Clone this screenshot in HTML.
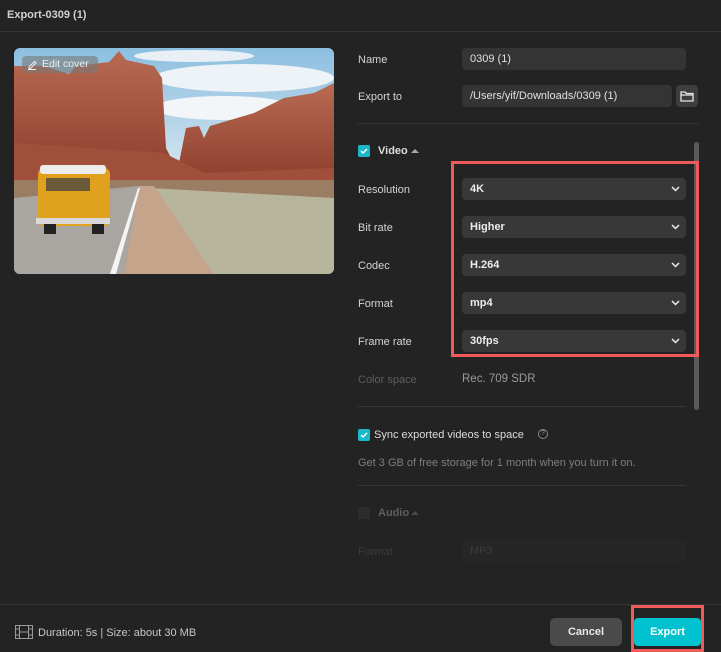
<!DOCTYPE html>
<html><head><style>
*{margin:0;padding:0;box-sizing:border-box}
body{width:721px;height:652px;background:#232323;font-family:"Liberation Sans",sans-serif;color:#d8d8d8;position:relative;overflow:hidden;font-size:11px}
.abs{position:absolute}
.title{left:7px;top:9px;font-size:11px;font-weight:bold;color:#d0d0d0}
.hl{height:1px;background:#363636}
.lbl{left:358px;font-size:11px;color:#d4d4d4}
.inp{left:462px;height:22px;background:#343434;border-radius:4px;padding-left:8px;line-height:23px;color:#e0e0e0;font-size:11px}
.sel{left:462px;width:224px;height:22px;background:#383838;border-radius:4px;padding-left:8px;line-height:23px;color:#ececec;font-size:11px;font-weight:bold}
.sel svg{position:absolute;right:6px;top:8px}
.cb{width:12px;height:12px;border-radius:2px;background:#1ab8c9}
</style></head><body>
<div class="abs title">Export-0309 (1)</div>
<div class="abs hl" style="left:0;top:31px;width:721px"></div>

<div class="abs" style="left:14px;top:48px;width:320px;height:226px;border-radius:6px;overflow:hidden">
<svg width="320" height="226" viewBox="0 0 320 226">
<defs><linearGradient id="sky" x1="0" y1="0" x2="0" y2="1"><stop offset="0" stop-color="#8cbfe0"/><stop offset="0.6" stop-color="#dbe8f1"/><stop offset="1" stop-color="#dfe9ef"/></linearGradient>
<linearGradient id="rk" x1="0" y1="0" x2="0" y2="1"><stop offset="0" stop-color="#b86a52"/><stop offset="1" stop-color="#8e3e2c"/></linearGradient></defs>
<rect width="320" height="226" fill="url(#sky)"/>
<ellipse cx="230" cy="30" rx="90" ry="14" fill="#eef3f7"/>
<ellipse cx="210" cy="60" rx="70" ry="12" fill="#f3f6f9"/>
<ellipse cx="180" cy="8" rx="60" ry="6" fill="#e8eff5"/>
<path d="M0 18 L30 18 L55 26 L62 18 L95 14 L105 3 L112 12 L140 18 L148 30 L152 100 L158 112 L160 125 L0 130Z" fill="url(#rk)"/>
<path d="M165 115 L172 80 L185 78 L190 90 L196 78 L240 65 L270 50 L300 45 L320 35 L320 135 L160 135Z" fill="url(#rk)"/>
<path d="M0 95 L150 105 L190 125 L320 120 L320 140 L0 140Z" fill="#a0503a"/>
<rect x="0" y="132" width="320" height="94" fill="#9a7d62"/>
<path d="M135 140 L320 150 L320 226 L170 226Z" fill="#b7b59c"/>
<path d="M0 150 L125 138 L110 226 L0 226Z" fill="#a9a6a2"/>
<path d="M125 138 L140 138 L200 226 L110 226Z" fill="#c4a48a"/>
<path d="M124 140 L126 140 L102 226 L96 226Z" fill="#f4f4f4"/>
<rect x="24" y="120" width="72" height="58" rx="6" fill="#e0a11f"/>
<rect x="26" y="117" width="66" height="9" rx="3" fill="#ececec"/>
<rect x="32" y="130" width="44" height="13" fill="#6b5a3a"/>
<rect x="22" y="170" width="74" height="6" fill="#d9d9d9"/>
<rect x="30" y="176" width="12" height="10" fill="#222"/>
<rect x="78" y="176" width="12" height="10" fill="#222"/>
</svg>
<div class="abs" style="left:8px;top:8px;width:76px;height:17px;background:rgba(120,120,120,0.6);border-radius:4px;color:#eee;font-size:10.5px;line-height:17px;padding-left:20px">Edit cover</div>
<svg class="abs" style="left:13px;top:11px" width="11" height="11" viewBox="0 0 11 11"><path d="M2 8 L7.5 2.5 L9 4 L3.5 9.5 H2Z M1 10.5 H9" stroke="#eee" fill="none" stroke-width="1"/></svg>
</div>

<div class="abs lbl" style="top:54px">Name</div>
<div class="abs inp" style="top:48px;width:224px">0309 (1)</div>
<div class="abs lbl" style="top:91px">Export to</div>
<div class="abs inp" style="top:85px;width:210px">/Users/yif/Downloads/0309 (1)</div>
<div class="abs" style="left:676px;top:85px;width:22px;height:22px;background:#3e3e3e;border-radius:4px"></div>
<svg class="abs" style="left:680px;top:90px" width="14" height="12" viewBox="0 0 14 12"><path d="M1 2 H5 L6.5 3.5 H13 V11 H1Z M1 5 H13" stroke="#e8e8e8" fill="none" stroke-width="1.3"/></svg>
<div class="abs hl" style="left:358px;top:123px;width:340px"></div>

<div class="abs cb" style="left:358px;top:145px"></div>
<svg class="abs" style="left:358px;top:145px" width="12" height="12"><path d="M3 6 L5 8 L9 4" stroke="#fff" fill="none" stroke-width="1.5"/></svg>
<div class="abs" style="left:378px;top:145px;font-weight:bold;color:#ddd">Video</div>
<svg class="abs" style="left:411px;top:148px" width="8" height="6"><path d="M0 5 L4 1 L8 5Z" fill="#aaa"/></svg>
<div class="abs" style="left:694px;top:142px;width:5px;height:268px;background:#5a5a5a;border-radius:3px"></div>

<div class="abs lbl" style="top:184px">Resolution</div>
<div class="abs sel" style="top:178px">4K<svg width="9" height="6"><path d="M1 1 L4.5 4.5 L8 1" stroke="#eee" fill="none" stroke-width="1.5"/></svg></div>
<div class="abs lbl" style="top:222px">Bit rate</div>
<div class="abs sel" style="top:216px">Higher<svg width="9" height="6"><path d="M1 1 L4.5 4.5 L8 1" stroke="#eee" fill="none" stroke-width="1.5"/></svg></div>
<div class="abs lbl" style="top:260px">Codec</div>
<div class="abs sel" style="top:254px">H.264<svg width="9" height="6"><path d="M1 1 L4.5 4.5 L8 1" stroke="#eee" fill="none" stroke-width="1.5"/></svg></div>
<div class="abs lbl" style="top:298px">Format</div>
<div class="abs sel" style="top:292px">mp4<svg width="9" height="6"><path d="M1 1 L4.5 4.5 L8 1" stroke="#eee" fill="none" stroke-width="1.5"/></svg></div>
<div class="abs lbl" style="top:336px">Frame rate</div>
<div class="abs sel" style="top:330px">30fps<svg width="9" height="6"><path d="M1 1 L4.5 4.5 L8 1" stroke="#eee" fill="none" stroke-width="1.5"/></svg></div>
<div class="abs" style="left:451px;top:161px;width:248px;height:196px;border:3px solid #ef5a5a"></div>

<div class="abs lbl" style="top:374px;color:#5e5e5e">Color space</div>
<div class="abs" style="left:462px;top:373px;color:#9a9a9a;font-size:11.5px">Rec. 709 SDR</div>
<div class="abs hl" style="left:358px;top:406px;width:328px"></div>

<div class="abs cb" style="left:358px;top:429px"></div>
<svg class="abs" style="left:358px;top:429px" width="12" height="12"><path d="M3 6 L5 8 L9 4" stroke="#fff" fill="none" stroke-width="1.5"/></svg>
<div class="abs" style="left:374px;top:429px;color:#ddd">Sync exported videos to space</div>
<div class="abs" style="left:538px;top:429px;width:10px;height:10px;border:1px solid #888;border-radius:50%;font-size:7px;line-height:8px;text-align:center;color:#999">?</div>
<div class="abs" style="left:358px;top:457px;color:#7e7e7e">Get 3 GB of free storage for 1 month when you turn it on.</div>
<div class="abs hl" style="left:358px;top:485px;width:328px"></div>

<div class="abs" style="left:358px;top:507px;width:12px;height:12px;border-radius:2px;background:#2c2c2c"></div>
<div class="abs" style="left:378px;top:507px;color:#5e5e5e;font-weight:bold">Audio</div>
<svg class="abs" style="left:411px;top:510px" width="8" height="6"><path d="M0 5 L4 1 L8 5Z" fill="#4a4a4a"/></svg>
<div class="abs lbl" style="top:546px;color:#3c3c3c">Format</div>
<div class="abs" style="left:462px;top:540px;width:224px;height:22px;background:#262626;border-radius:4px;padding-left:8px;line-height:23px;color:#3c3c3c">MP3</div>

<div class="abs hl" style="left:0;top:604px;width:721px"></div>
<svg class="abs" style="left:15px;top:625px" width="18" height="14" viewBox="0 0 18 14"><rect x="0.5" y="0.5" width="17" height="13" fill="none" stroke="#999"/><path d="M4.5 0.5 V13.5 M13.5 0.5 V13.5 M4.5 7 H13.5 M0.5 4 H4.5 M0.5 10 H4.5 M13.5 4 H17.5 M13.5 10 H17.5" stroke="#999"/></svg>
<div class="abs" style="left:38px;top:627px;color:#c8c8c8">Duration: 5s | Size: about 30 MB</div>
<div class="abs" style="left:550px;top:618px;width:72px;height:28px;background:#4a4a4a;border-radius:5px;text-align:center;line-height:28px;font-weight:bold;color:#e8e8e8">Cancel</div>
<div class="abs" style="left:631px;top:605px;width:73px;height:47px;border:3px solid #ef5a5a"></div>
<div class="abs" style="left:634px;top:618px;width:67px;height:28px;background:#00c2cf;border-radius:4px;text-align:center;line-height:28px;font-weight:bold;color:#fff">Export</div>
</body></html>
